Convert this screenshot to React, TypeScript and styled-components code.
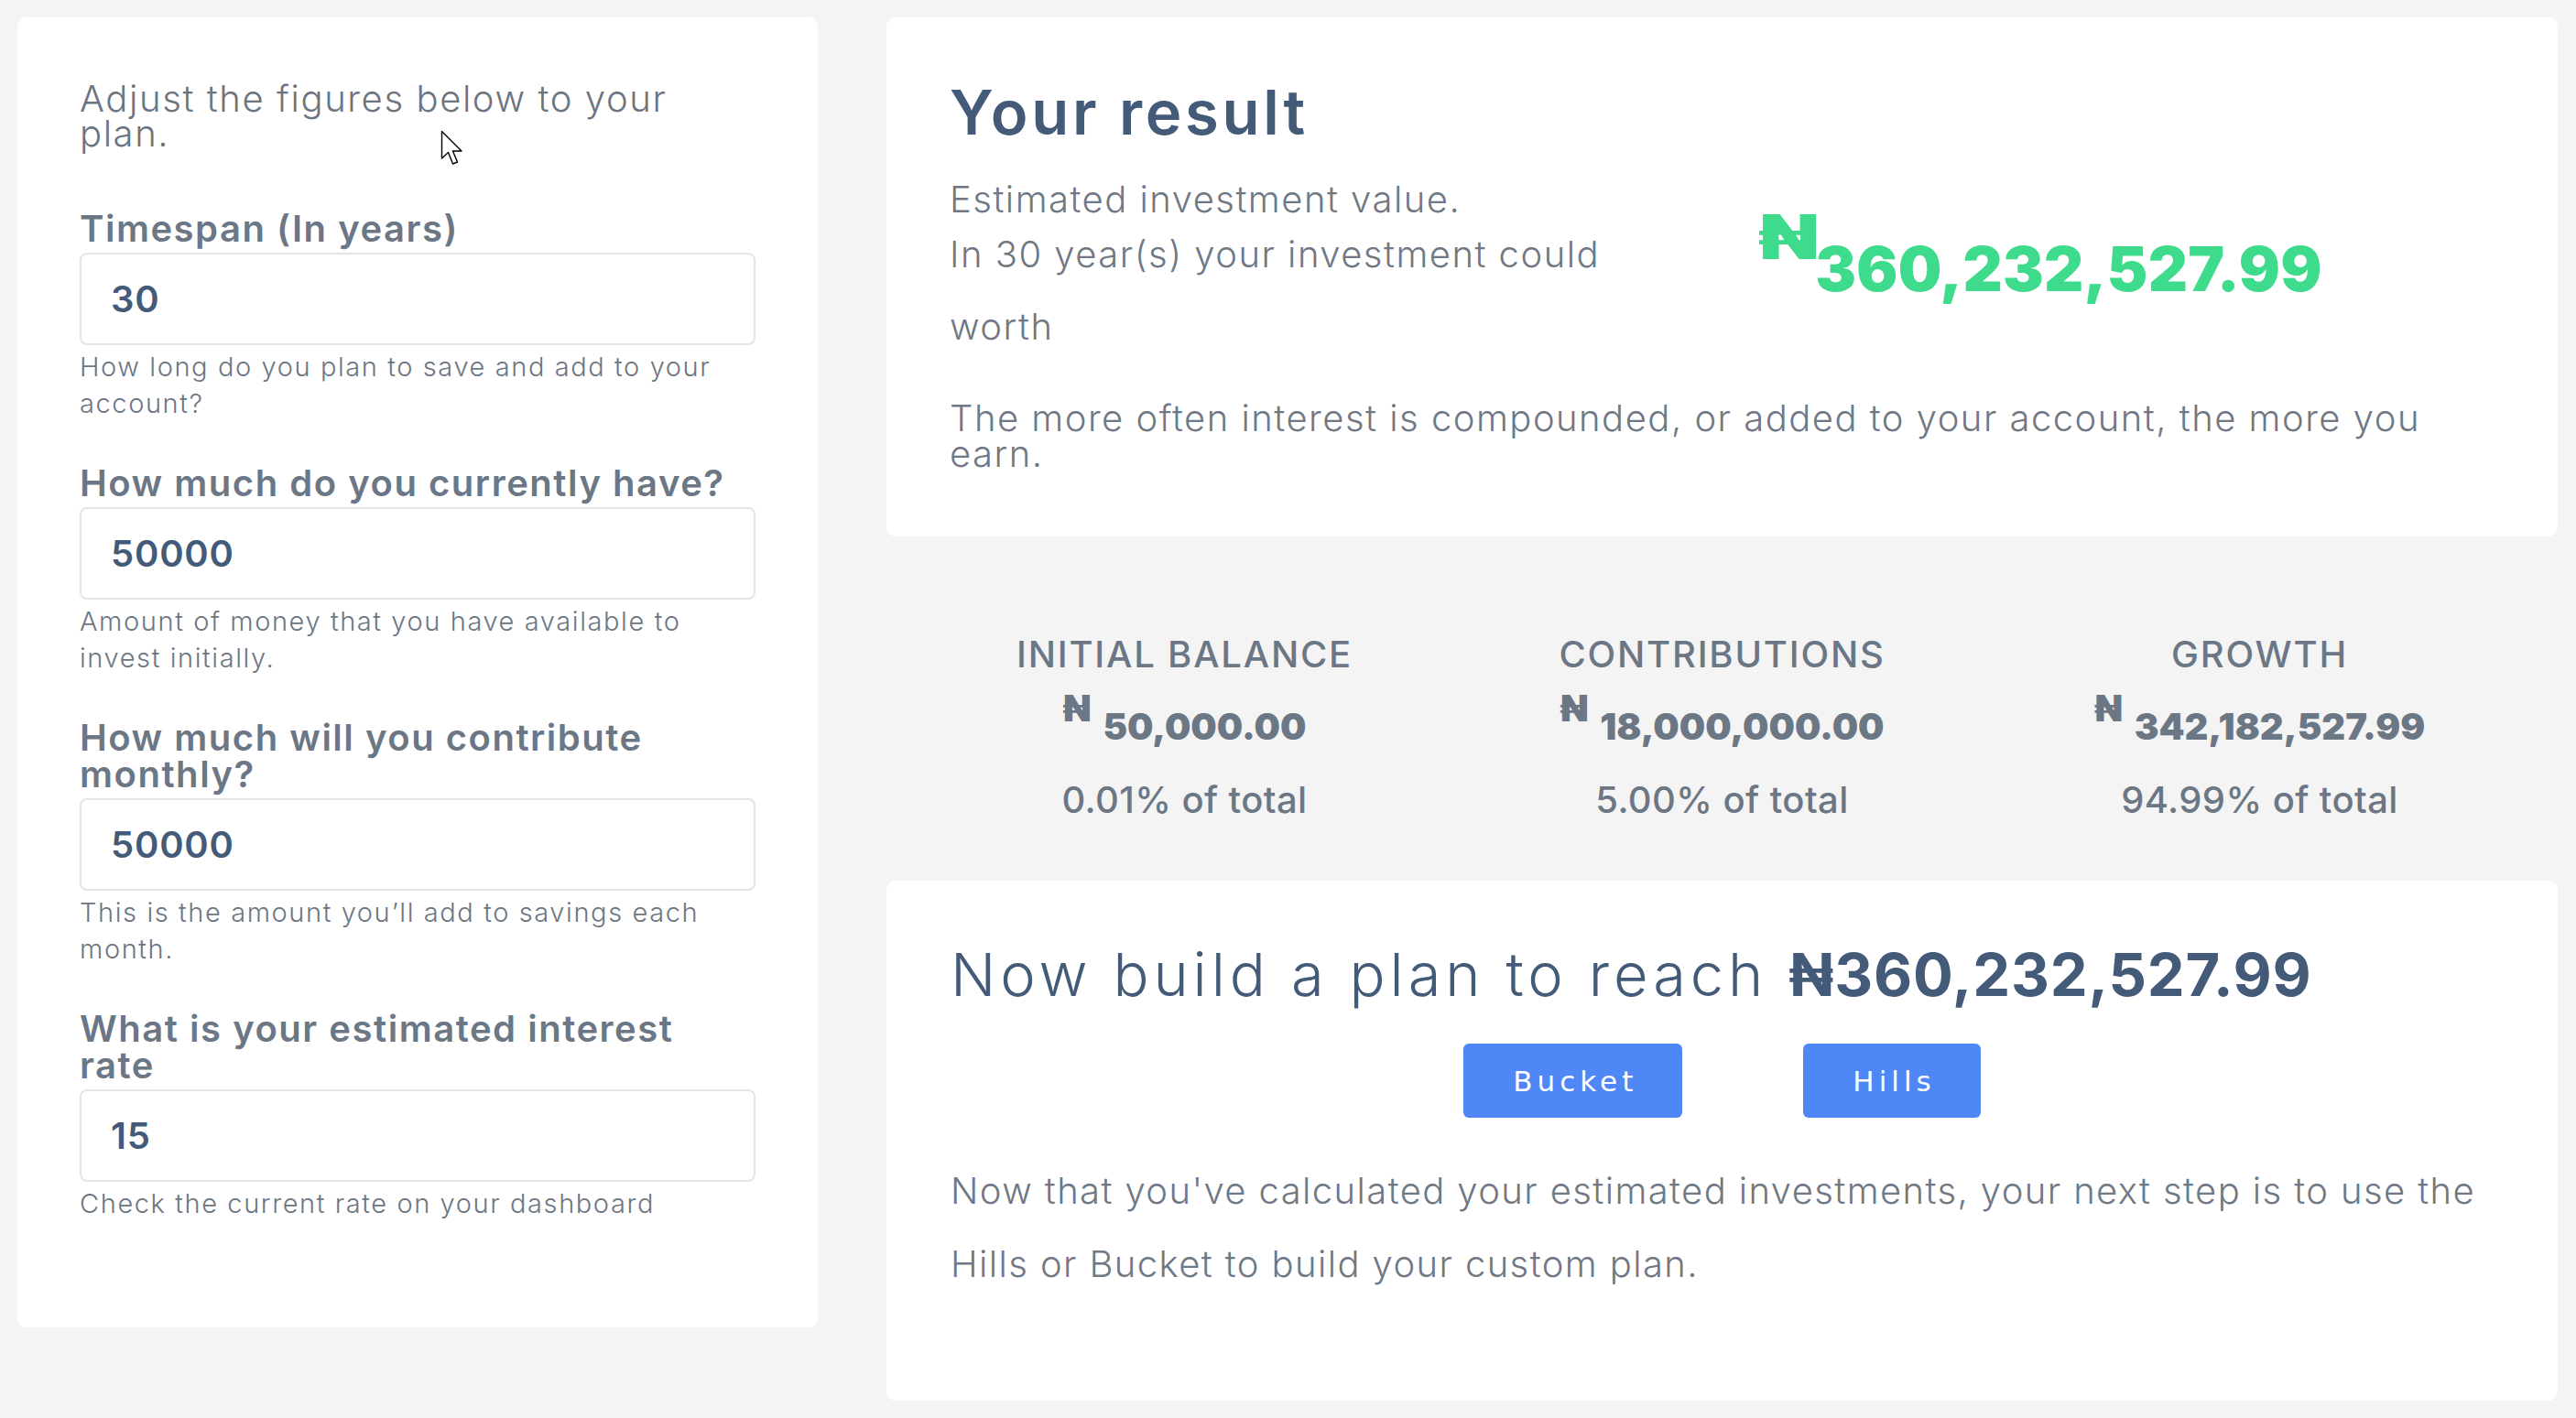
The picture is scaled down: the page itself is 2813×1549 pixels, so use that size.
import React from "react";
import styled, { createGlobalStyle } from "styled-components";

const GlobalStyle = createGlobalStyle`
  html, body {
    margin: 0;
    padding: 0;
    background: #f4f4f4;
  }
  body {
    font-family: Inter, "Noto Sans", "DejaVu Sans", sans-serif;
  }
  * {
    box-sizing: border-box;
  }
`;

const Page = styled.div`
  position: relative;
  display: flex;
  align-items: flex-start;
  gap: 75px;
  width: 2813px;
  min-height: 1549px;
  padding: 19px 20px 19px 19px;
`;

const Card = styled.section`
  background: #ffffff;
  border-radius: 10px;
`;

const FormCard = styled(Card)`
  flex: none;
  width: 874px;
  padding: 70px 68px 68px;
`;

const Intro = styled.p`
  margin: 0 0 65px;
  font-size: 40px;
  font-weight: 300;
  line-height: 38px;
  letter-spacing: 0.04em;
  color: #6b7480;
  white-space: nowrap;
`;

const Field = styled.div`
  margin-bottom: 47px;
`;

const Label = styled.label`
  display: block;
  margin-bottom: 6px;
  font-size: 40px;
  font-weight: 600;
  line-height: 40px;
  letter-spacing: 0.038em;
  color: #6c7786;
  white-space: nowrap;
`;

const NumberInput = styled.input`
  display: block;
  width: 100%;
  height: 101px;
  margin: 0;
  padding: 0 32px;
  border: 2px solid #e1e5ea;
  border-radius: 8px;
  background: #ffffff;
  font-family: inherit;
  font-size: 40px;
  font-weight: 600;
  letter-spacing: 0.02em;
  color: #435a78;
  outline: none;
`;

const Help = styled.p`
  margin: 4px 0 0;
  font-size: 29px;
  font-weight: 300;
  line-height: 40px;
  letter-spacing: 0.055em;
  color: #6c7682;
  white-space: nowrap;
`;

const RightColumn = styled.div`
  flex: 1;
  min-width: 0;
  display: flex;
  flex-direction: column;
`;

const ResultCard = styled(Card)`
  padding: 64px 69px 71px;
`;

const Title = styled.h2`
  margin: 0;
  font-size: 67px;
  font-weight: 600;
  line-height: 80px;
  letter-spacing: 0.055em;
  color: #435a78;
`;

const ResultRow = styled.div`
  display: grid;
  grid-template-columns: 883px 1fr;
  margin-top: 35px;
`;

const Lead = styled.p<{ $lh: number }>`
  margin: 0;
  font-size: 40px;
  font-weight: 300;
  line-height: ${(p) => p.$lh}px;
  letter-spacing: 0.037em;
  color: #6f7884;
  white-space: nowrap;
`;

const BigAmount = styled.div`
  align-self: start;
  margin-top: 21px;
  font-size: 67px;
  font-weight: 900;
  line-height: 80px;
  letter-spacing: 0.2px;
  color: #3ddb8b;
  white-space: nowrap;
`;

const Naira = styled.span<{ $raise: number; $gap?: number; $stretch?: number }>`
  display: inline-block;
  vertical-align: ${(p) => p.$raise}px;
  margin-right: ${(p) => p.$gap ?? 0}px;
  transform: scaleX(${(p) => p.$stretch ?? 1});
  transform-origin: left center;
`;

const Note = styled.p`
  margin: 41px 0 0;
  font-size: 40px;
  font-weight: 300;
  line-height: 39px;
  letter-spacing: 0.037em;
  color: #6f7884;
  white-space: nowrap;
`;

const Stats = styled.div`
  display: grid;
  grid-template-columns: repeat(3, 1fr);
  padding: 109px 32px 68px;
  text-align: center;
  color: #6c7786;
`;

const Stat = styled.div`
  display: flex;
  flex-direction: column;
  align-items: center;
`;

const StatLabel = styled.div`
  font-size: 40px;
  font-weight: 500;
  line-height: 40px;
  letter-spacing: 0.045em;
`;

const StatAmount = styled.div`
  margin-top: 19px;
  font-size: 40px;
  font-weight: 900;
  line-height: 40px;
  white-space: nowrap;
`;

const StatShare = styled.div`
  margin-top: 40px;
  font-size: 40px;
  font-weight: 500;
  line-height: 40px;
  letter-spacing: 0.01em;
`;

const PlanCard = styled(Card)`
  padding: 63px 70px 109px;
`;

const PlanTitle = styled.h2`
  margin: 0;
  font-size: 65px;
  font-weight: 300;
  line-height: 80px;
  letter-spacing: 0.075em;
  color: #435a78;
  white-space: nowrap;

  strong {
    font-weight: 700;
    letter-spacing: 0.012em;
  }
`;

const ButtonRow = styled.div`
  display: flex;
  justify-content: center;
  gap: 132px;
  margin-top: 35px;
`;

const PlanButton = styled.button`
  height: 81px;
  padding: 0 49px 0 54px;
  border: none;
  border-radius: 6px;
  background: #4f87f7;
  color: #ffffff;
  font-family: "DejaVu Sans", Verdana, sans-serif;
  font-size: 31px;
  letter-spacing: 5px;
  cursor: pointer;
`;

const PlanText = styled.p`
  margin: 40px 0 0;
  font-size: 40px;
  font-weight: 300;
  line-height: 80px;
  letter-spacing: 0.035em;
  color: #6f7884;
  white-space: nowrap;
`;

const Pointer = styled.svg`
  position: absolute;
  left: 481px;
  top: 142px;
  width: 26px;
  height: 40px;
  pointer-events: none;
`;

const fields = [
  {
    id: "timespan",
    label: ["Timespan (In years)"],
    value: "30",
    help: ["How long do you plan to save and add to your", "account?"],
  },
  {
    id: "current",
    label: ["How much do you currently have?"],
    value: "50000",
    help: ["Amount of money that you have available to", "invest initially."],
  },
  {
    id: "monthly",
    label: ["How much will you contribute", "monthly?"],
    value: "50000",
    help: ["This is the amount you\u2019ll add to savings each", "month."],
  },
  {
    id: "rate",
    label: ["What is your estimated interest", "rate"],
    value: "15",
    help: ["Check the current rate on your dashboard"],
  },
];

const stats = [
  { label: "INITIAL BALANCE", amount: "50,000.00", share: "0.01% of total" },
  { label: "CONTRIBUTIONS", amount: "18,000,000.00", share: "5.00% of total" },
  { label: "GROWTH", amount: "342,182,527.99", share: "94.99% of total" },
];

const Lines = ({ lines }: { lines: string[] }) => (
  <>
    {lines.map((l, i) => (
      <React.Fragment key={i}>
        {i > 0 && <br />}
        {l}
      </React.Fragment>
    ))}
  </>
);

export default function App() {
  return (
    <>
      <GlobalStyle />
      <Page>
        <FormCard>
          <Intro>
            Adjust the figures below to your
            <br />
            plan.
          </Intro>
          {fields.map((f) => (
            <Field key={f.id}>
              <Label htmlFor={f.id}>
                <Lines lines={f.label} />
              </Label>
              <NumberInput id={f.id} type="text" defaultValue={f.value} />
              <Help>
                <Lines lines={f.help} />
              </Help>
            </Field>
          ))}
        </FormCard>

        <RightColumn>
          <ResultCard>
            <Title>Your result</Title>
            <ResultRow>
              <div>
                <Lead $lh={40}>Estimated investment value.</Lead>
                <Lead $lh={79}>
                  In 30 year(s) your investment could
                  <br />
                  worth
                </Lead>
              </div>
              <BigAmount>
                <Naira $raise={35} $gap={12} $stretch={1.28}>₦</Naira>360,232,527.99
              </BigAmount>
            </ResultRow>
            <Note>
              The more often interest is compounded, or added to your account, the more you
              <br />
              earn.
            </Note>
          </ResultCard>

          <Stats>
            {stats.map((s) => (
              <Stat key={s.label}>
                <StatLabel>{s.label}</StatLabel>
                <StatAmount>
                  <Naira $raise={20} $gap={6}>₦</Naira> {s.amount}
                </StatAmount>
                <StatShare>{s.share}</StatShare>
              </Stat>
            ))}
          </Stats>

          <PlanCard>
            <PlanTitle>
              Now build a plan to reach <strong>₦360,232,527.99</strong>
            </PlanTitle>
            <ButtonRow>
              <PlanButton type="button">Bucket</PlanButton>
              <PlanButton type="button">Hills</PlanButton>
            </ButtonRow>
            <PlanText>
              Now that you've calculated your estimated investments, your next step is to use the
              <br />
              Hills or Bucket to build your custom plan.
            </PlanText>
          </PlanCard>
        </RightColumn>

        <Pointer viewBox="0 0 26 40" aria-hidden="true">
          <path
            d="M1.5 1.5 L1.5 31 L8.5 24.5 L13.5 37 L18.5 35 L13.5 23 L23 23 Z"
            fill="#ffffff"
            stroke="#000000"
            strokeWidth="1.4"
            strokeLinejoin="round"
          />
        </Pointer>
      </Page>
    </>
  );
}
